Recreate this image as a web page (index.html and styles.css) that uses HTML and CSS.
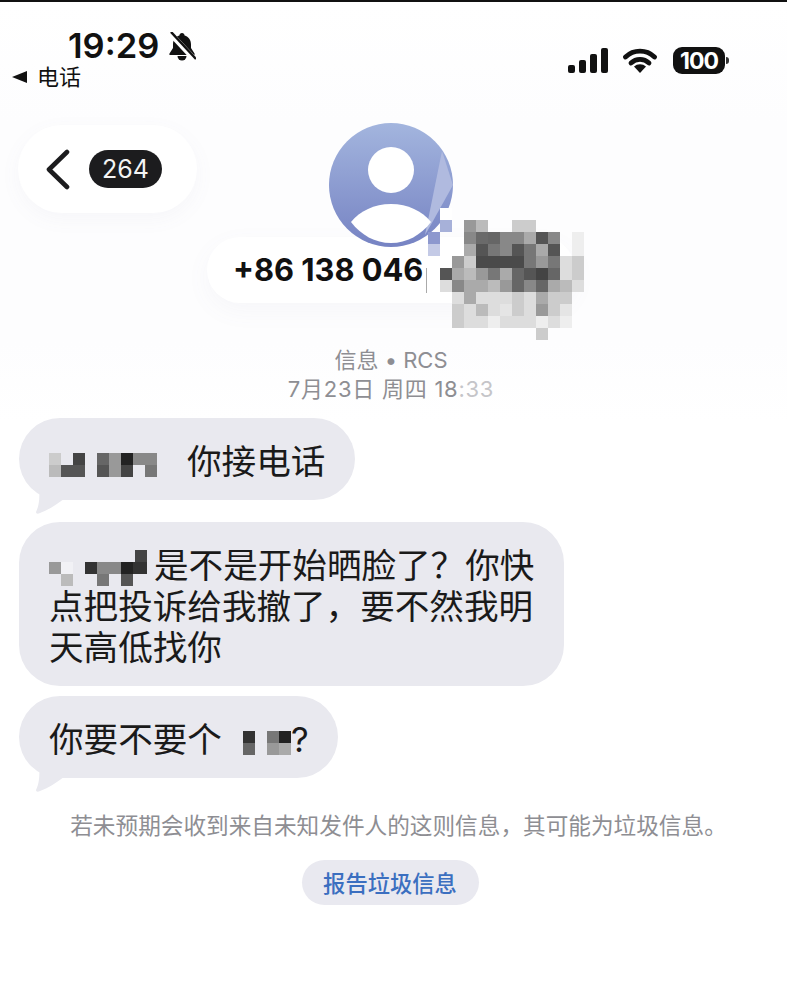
FILE: index.html
```html
<!DOCTYPE html>
<html lang="en">
<head>
    <meta charset="UTF-8">
    <meta name="viewport" content="width=device-width, initial-scale=1.0">
    <title>信息</title>
    <link rel="stylesheet" href="styles.css">
</head>
<body>
    <div class="screen">
        <div class="status-bar">
            <div class="status-left">
                <div class="clock">
                    <span class="time">19:29</span>
                    <svg class="bell" viewBox="0 0 28 29" width="28" height="29">
                        <path d="M14 1c1.500 0 2.500 1 2.600 2.400 4 1.200 6.400 4.500 6.400 9V16l3.500 5.500c.5 1-.1 1.500-1 1.500H2.500c-.9 0-1.500-.5-1-1.500L5 16v-3.600c0-4.500 2.400-7.800 6.400-9C11.500 2 12.500 1 14 1z" fill="#111"/>
                        <path d="M9.500 24h9a4.500 4.500 0 0 1-9 0z" fill="#111"/>
                        <path d="M2 1l25 27" stroke="#fff" stroke-width="5.500"/>
                        <path d="M3 0l25 27" stroke="#111" stroke-width="2.500"/>
                    </svg>
                </div>
                <div class="return-link"><span class="return-arrow"></span>电话</div>
            </div>
            <div class="status-right">
                <svg viewBox="0 0 40 25" width="40" height="25">
                    <rect x="0" y="17" width="7" height="8" rx="2" fill="#111"/>
                    <rect x="11" y="12" width="7" height="13" rx="2" fill="#111"/>
                    <rect x="22" y="6" width="7" height="19" rx="2" fill="#111"/>
                    <rect x="33" y="0" width="7" height="25" rx="2" fill="#111"/>
                </svg>
                <svg class="wifi" viewBox="0 0 34 25" width="34" height="25">
                    <path d="M2.500 9a21 21 0 0 1 29 0" fill="none" stroke="#111" stroke-width="4.800" stroke-linecap="round"/>
                    <path d="M8 15a13 13 0 0 1 18 0" fill="none" stroke="#111" stroke-width="4.800" stroke-linecap="round"/>
                    <path d="M11 18.500a9 9 0 0 1 12 0L17 25z" fill="#111"/>
                </svg>
                <div class="battery"><span class="battery-level">100</span><span class="battery-nub"></span></div>
            </div>
        </div>

        <div class="header">
            <div class="back-pill">
                <svg viewBox="0 0 26 41" width="26" height="41">
                    <path d="M22 3L4 20.500 22 38" fill="none" stroke="#1c1c1e" stroke-width="4.600" stroke-linecap="round" stroke-linejoin="round"/>
                </svg>
                <span class="badge">264</span>
            </div>
            <div class="contact">
                <svg class="avatar" viewBox="0 0 124 124" width="124" height="124">
                    <defs>
                        <linearGradient id="avatar-fill" x1="0" y1="0" x2="0" y2="1">
                            <stop offset="0" stop-color="#a3b5de"/>
                            <stop offset="1" stop-color="#7683c3"/>
                        </linearGradient>
                        <clipPath id="avatar-clip"><circle cx="62" cy="62" r="62"/></clipPath>
                    </defs>
                    <circle cx="62" cy="62" r="62" fill="url(#avatar-fill)"/>
                    <path d="M113 28L124 62 104 98 96 112z" fill="#b0badf" clip-path="url(#avatar-clip)"/>
                    <circle cx="62" cy="47" r="23" fill="#fff"/>
                    <path d="M22 99c9-11 23-18 40-18s31 7 40 18c-10 13-24 21-40 21s-30-8-40-21z" fill="#fff"/>
                </svg>
                <div class="phone-pill">
                    <span class="phone">+86 138 046</span>
                    <span class="phone-caret"></span>
                    <svg class="mosaic-large" viewBox="-12 -12 156 144" width="156" height="144" shape-rendering="crispEdges">
                        <rect x="-12" y="12" width="12" height="12" fill="#8d98ce"/>
                        <rect x="0" y="-12" width="12" height="12" fill="#fff"/>
                        <rect x="0" y="0" width="12" height="12" fill="#a7b1d9"/>
                        <rect x="-12" y="24" width="12" height="12" fill="#c4cae6"/>

                        <rect x="24" y="0" width="12" height="12" fill="#999"/>
                        <rect x="36" y="0" width="12" height="12" fill="#bbb"/>
                        <rect x="72" y="0" width="12" height="12" fill="#ccc"/>
                        <rect x="84" y="0" width="12" height="12" fill="#ccc"/>

                        <rect x="24" y="12" width="12" height="12" fill="#888"/>
                        <rect x="36" y="12" width="12" height="12" fill="#6a6a6a"/>
                        <rect x="48" y="12" width="12" height="12" fill="#666"/>
                        <rect x="60" y="12" width="12" height="12" fill="#888"/>
                        <rect x="72" y="12" width="12" height="12" fill="#888"/>
                        <rect x="84" y="12" width="12" height="12" fill="#aaa"/>
                        <rect x="96" y="12" width="12" height="12" fill="#555"/>
                        <rect x="108" y="12" width="12" height="12" fill="#888"/>
                        <rect x="132" y="12" width="12" height="12" fill="#eee"/>

                        <rect x="24" y="24" width="12" height="12" fill="#aaa"/>
                        <rect x="36" y="24" width="12" height="12" fill="#555"/>
                        <rect x="48" y="24" width="12" height="12" fill="#777"/>
                        <rect x="60" y="24" width="12" height="12" fill="#888"/>
                        <rect x="72" y="24" width="12" height="12" fill="#555"/>
                        <rect x="84" y="24" width="12" height="12" fill="#777"/>
                        <rect x="96" y="24" width="12" height="12" fill="#aaa"/>
                        <rect x="108" y="24" width="12" height="12" fill="#555"/>
                        <rect x="132" y="24" width="12" height="12" fill="#eee"/>

                        <rect x="12" y="36" width="12" height="12" fill="#999"/>
                        <rect x="24" y="36" width="12" height="12" fill="#ccc"/>
                        <rect x="36" y="36" width="12" height="12" fill="#4a4a4a"/>
                        <rect x="48" y="36" width="12" height="12" fill="#4a4a4a"/>
                        <rect x="60" y="36" width="12" height="12" fill="#4a4a4a"/>
                        <rect x="72" y="36" width="12" height="12" fill="#4a4a4a"/>
                        <rect x="84" y="36" width="12" height="12" fill="#777"/>
                        <rect x="96" y="36" width="12" height="12" fill="#999"/>
                        <rect x="108" y="36" width="12" height="12" fill="#777"/>
                        <rect x="120" y="36" width="12" height="12" fill="#ddd"/>
                        <rect x="132" y="36" width="12" height="12" fill="#ccc"/>

                        <rect x="0" y="48" width="12" height="12" fill="#555"/>
                        <rect x="12" y="48" width="12" height="12" fill="#aaa"/>
                        <rect x="24" y="48" width="12" height="12" fill="#bbb"/>
                        <rect x="36" y="48" width="12" height="12" fill="#999"/>
                        <rect x="48" y="48" width="12" height="12" fill="#777"/>
                        <rect x="60" y="48" width="12" height="12" fill="#aaa"/>
                        <rect x="72" y="48" width="12" height="12" fill="#666"/>
                        <rect x="84" y="48" width="12" height="12" fill="#555"/>
                        <rect x="96" y="48" width="12" height="12" fill="#444"/>
                        <rect x="108" y="48" width="12" height="12" fill="#666"/>
                        <rect x="120" y="48" width="12" height="12" fill="#ddd"/>
                        <rect x="132" y="48" width="12" height="12" fill="#ccc"/>

                        <rect x="0" y="60" width="12" height="12" fill="#ddd"/>
                        <rect x="12" y="60" width="12" height="12" fill="#888"/>
                        <rect x="24" y="60" width="12" height="12" fill="#aaa"/>
                        <rect x="36" y="60" width="12" height="12" fill="#aaa"/>
                        <rect x="48" y="60" width="12" height="12" fill="#bbb"/>
                        <rect x="60" y="60" width="12" height="12" fill="#999"/>
                        <rect x="72" y="60" width="12" height="12" fill="#666"/>
                        <rect x="84" y="60" width="12" height="12" fill="#888"/>
                        <rect x="96" y="60" width="12" height="12" fill="#666"/>
                        <rect x="108" y="60" width="12" height="12" fill="#aaa"/>
                        <rect x="120" y="60" width="12" height="12" fill="#bbb"/>
                        <rect x="132" y="60" width="12" height="12" fill="#ddd"/>

                        <rect x="12" y="72" width="12" height="12" fill="#ddd"/>
                        <rect x="24" y="72" width="12" height="12" fill="#aaa"/>
                        <rect x="36" y="72" width="12" height="12" fill="#ddd"/>
                        <rect x="48" y="72" width="12" height="12" fill="#ddd"/>
                        <rect x="60" y="72" width="12" height="12" fill="#ddd"/>
                        <rect x="72" y="72" width="12" height="12" fill="#ccc"/>
                        <rect x="84" y="72" width="12" height="12" fill="#ddd"/>
                        <rect x="96" y="72" width="12" height="12" fill="#aaa"/>
                        <rect x="108" y="72" width="12" height="12" fill="#ccc"/>
                        <rect x="120" y="72" width="12" height="12" fill="#ccc"/>

                        <rect x="12" y="84" width="12" height="12" fill="#ccc"/>
                        <rect x="24" y="84" width="12" height="12" fill="#ddd"/>
                        <rect x="36" y="84" width="12" height="12" fill="#bbb"/>
                        <rect x="48" y="84" width="12" height="12" fill="#ddd"/>
                        <rect x="60" y="84" width="12" height="12" fill="#e5e5e5"/>
                        <rect x="72" y="84" width="12" height="12" fill="#ccc"/>
                        <rect x="84" y="84" width="12" height="12" fill="#ddd"/>
                        <rect x="96" y="84" width="12" height="12" fill="#999"/>
                        <rect x="108" y="84" width="12" height="12" fill="#ccc"/>
                        <rect x="120" y="84" width="12" height="12" fill="#e5e5e5"/>

                        <rect x="12" y="96" width="12" height="12" fill="#ccc"/>
                        <rect x="24" y="96" width="12" height="12" fill="#ddd"/>
                        <rect x="36" y="96" width="12" height="12" fill="#ddd"/>
                        <rect x="48" y="96" width="12" height="12" fill="#eee"/>
                        <rect x="60" y="96" width="12" height="12" fill="#ddd"/>
                        <rect x="72" y="96" width="12" height="12" fill="#ddd"/>
                        <rect x="84" y="96" width="12" height="12" fill="#ddd"/>
                        <rect x="96" y="96" width="12" height="12" fill="#eee"/>
                        <rect x="108" y="96" width="12" height="12" fill="#ddd"/>
                        <rect x="120" y="96" width="12" height="12" fill="#eee"/>

                        <rect x="96" y="108" width="12" height="12" fill="#ccc"/>
                    </svg>
                </div>
            </div>
        </div>

        <div class="thread-meta">
            <div>信息 • RCS</div>
            <div class="thread-date">7月23日 周四 18<span class="faded">:33</span></div>
        </div>

        <div class="thread">
            <div class="bubble bubble-short">
                <svg class="mosaic mosaic-one" viewBox="0 0 108 24" width="108" height="24" shape-rendering="crispEdges">
                    <rect x="0" y="0" width="12" height="12" fill="#ccc"/>
                    <rect x="0" y="12" width="12" height="12" fill="#bbb"/>
                    <rect x="12" y="12" width="12" height="12" fill="#555"/>
                    <rect x="24" y="0" width="12" height="12" fill="#444"/>
                    <rect x="24" y="12" width="12" height="12" fill="#555"/>
                    <rect x="48" y="0" width="12" height="12" fill="#666"/>
                    <rect x="48" y="12" width="12" height="12" fill="#555"/>
                    <rect x="60" y="0" width="12" height="12" fill="#999"/>
                    <rect x="60" y="12" width="12" height="12" fill="#999"/>
                    <rect x="72" y="0" width="12" height="12" fill="#222"/>
                    <rect x="72" y="12" width="12" height="12" fill="#444"/>
                    <rect x="84" y="0" width="12" height="12" fill="#888"/>
                    <rect x="96" y="0" width="12" height="12" fill="#888"/>
                    <rect x="96" y="12" width="12" height="12" fill="#777"/>
                </svg>你接电话
                <svg class="tail" viewBox="0 0 28 26" width="28" height="26"><path d="M3 0C4 8 3 17 0 23c0 2 2 2 4 1C12 21 20 16 28 10V0z" fill="#e9e9ef"/></svg>
            </div>
            <div class="bubble bubble-long">
                <svg class="mosaic mosaic-two" viewBox="0 0 100 36" width="100" height="36" shape-rendering="crispEdges">
                    <rect x="86" y="0" width="12" height="12" fill="#444"/>
                    <rect x="0" y="12" width="12" height="12" fill="#999"/>
                    <rect x="12" y="12" width="12" height="12" fill="#f1f1f5"/>
                    <rect x="36" y="12" width="12" height="12" fill="#333"/>
                    <rect x="48" y="12" width="12" height="12" fill="#888"/>
                    <rect x="60" y="12" width="12" height="12" fill="#888"/>
                    <rect x="72" y="12" width="12" height="12" fill="#222"/>
                    <rect x="84" y="12" width="14" height="12" fill="#333"/>
                    <rect x="12" y="24" width="12" height="12" fill="#bbb"/>
                    <rect x="48" y="24" width="12" height="12" fill="#777"/>
                    <rect x="72" y="24" width="12" height="12" fill="#555"/>
                </svg>是不是开始晒脸了？你快<br>点把投诉给我撤了，要不然我明<br>天高低找你
            </div>
            <div class="bubble bubble-last">
                你要不要个<svg class="mosaic mosaic-three" viewBox="0 0 48 24" width="48" height="24" shape-rendering="crispEdges">
                    <rect x="0" y="0" width="12" height="12" fill="#333"/>
                    <rect x="0" y="12" width="12" height="12" fill="#666"/>
                    <rect x="24" y="0" width="12" height="12" fill="#777"/>
                    <rect x="24" y="12" width="12" height="12" fill="#999"/>
                    <rect x="36" y="0" width="12" height="12" fill="#222"/>
                    <rect x="36" y="12" width="12" height="12" fill="#aaa"/>
                </svg><span class="question">?</span>
                <svg class="tail" viewBox="0 0 28 26" width="28" height="26"><path d="M3 0C4 8 3 17 0 23c0 2 2 2 4 1C12 21 20 16 28 10V0z" fill="#e9e9ef"/></svg>
            </div>
        </div>

        <p class="spam-note">若未预期会收到来自未知发件人的这则信息，其可能为垃圾信息。</p>
        <div class="spam-action"><span class="spam-btn">报告垃圾信息</span></div>
    </div>
</body>
</html>
```

FILE: styles.css
```css
/* Reset default browser styles */
html, body {
    margin: 0;
    padding: 0;
    height: 100%;
    background: #fff;
    overflow: hidden;
    font-family: Inter, "Noto Sans CJK SC", sans-serif;
    color: #111;
}

.screen {
    width: 787px;
    height: 996px;
    box-sizing: border-box;
    border-top: 2px solid #111;
    background: linear-gradient(#fff 0, #fdfdfe 120px, #fdfdfe 340px, #fff 420px);
}

/* Status bar */
.status-bar {
    display: flex;
    justify-content: space-between;
    height: 121px;
    padding: 29px 62px 0 12px;
    box-sizing: border-box;
}

.clock {
    display: flex;
    align-items: center;
    gap: 9px;
    margin-left: 56px;
    height: 30px;
}

.time {
    font-size: 34.500px;
    font-weight: 600;
    line-height: 30px;
}

.return-link {
    display: flex;
    align-items: center;
    font-size: 22px;
    line-height: 26px;
    margin-top: 3px;
}

.return-arrow {
    width: 0;
    height: 0;
    border-style: solid;
    border-width: 6px 15px 6px 0;
    border-color: transparent #111 transparent transparent;
    margin-right: 10px;
}

.status-right {
    display: flex;
    align-items: flex-start;
    gap: 15px;
    padding-top: 17px;
}

.battery {
    position: relative;
    width: 52px;
    height: 27px;
    margin: -1px 0 0 1px;
    background: #111;
    border-radius: 9px;
    display: flex;
    align-items: center;
    justify-content: center;
}

.battery-level {
    color: #fff;
    font-size: 23px;
    font-weight: 700;
    letter-spacing: -1px;
}

.battery-nub {
    position: absolute;
    right: -4px;
    top: 10px;
    width: 3px;
    height: 7px;
    background: #333;
    border-radius: 0 3px 3px 0;
}

/* Header */
.header {
    display: grid;
    grid-template-columns: 179px 388px;
    padding-left: 18px;
}

.back-pill {
    display: flex;
    align-items: center;
    gap: 18px;
    height: 88px;
    margin-top: 2px;
    padding-left: 27px;
    box-sizing: border-box;
    background: #fff;
    border-radius: 44px;
    box-shadow: 0 6px 20px rgba(120, 120, 150, 0.05);
}

.badge {
    width: 73px;
    height: 38px;
    line-height: 38px;
    text-align: center;
    border-radius: 19px;
    background: #1c1c1e;
    color: #f4f4f4;
    font-size: 25px;
}

.contact {
    display: flex;
    flex-direction: column;
    align-items: center;
}

.avatar {
    position: relative;
    z-index: 1;
}

.phone-pill {
    position: relative;
    width: 368px;
    height: 66px;
    margin-top: -10px;
    box-sizing: border-box;
    padding-left: 26px;
    background: #fff;
    border-radius: 33px;
    box-shadow: 0 8px 24px rgba(120, 120, 150, 0.05);
}

.phone {
    display: block;
    font-size: 30.800px;
    font-weight: 700;
    line-height: 66px;
}

.phone-caret {
    position: absolute;
    left: 219px;
    top: 31px;
    width: 1px;
    height: 25px;
    background: #aaa;
}

.mosaic-large {
    position: absolute;
    z-index: 2;
    left: 221px;
    top: -29px;
}

/* Thread */
.thread-meta {
    margin-top: 43px;
    text-align: center;
    margin-right: 5px;
    font-size: 22px;
    line-height: 29px;
    color: #8e8e93;
}

.thread-date {
    letter-spacing: 0.75px;
}

.faded {
    color: #c5c5c9;
}

.thread {
    margin-top: 14px;
    padding-left: 19px;
    display: flex;
    flex-direction: column;
    align-items: flex-start;
}

.bubble {
    position: relative;
    padding: 20.500px 30px;
    background: #e9e9ef;
    border-radius: 41px;
    font-family: "Noto Sans CJK SC", sans-serif;
    font-size: 34.600px;
    line-height: 41px;
    color: #1a1a1a;
    white-space: nowrap;
}

.bubble-long {
    margin-top: 22px;
}

.bubble-last {
    margin-top: 10px;
    width: 259px;
}

.question {
    font-family: Inter, sans-serif;
    line-height: 1;
}

.mosaic {
    vertical-align: -3px;
}

.mosaic-one {
    margin-right: 30px;
}

.mosaic-two {
    vertical-align: 2px;
    margin: -14px 5px -10px 0;
}

.mosaic-three {
    margin-left: 21px;
}

.tail {
    position: absolute;
    left: 17px;
    bottom: -15px;
}

/* Footer */
.spam-note {
    margin: 32px 0 0 10px;
    text-align: center;
    font-family: "Noto Sans CJK SC", sans-serif;
    font-size: 22.650px;
    line-height: 30px;
    color: #8e8e93;
    white-space: nowrap;
}

.spam-action {
    display: flex;
    justify-content: center;
    margin: 20px 7px 0 0;
}

.spam-btn {
    width: 177px;
    height: 45px;
    line-height: 44px;
    text-align: center;
    background: #e9e9f0;
    border-radius: 23px;
    color: #3b6fc0;
    font-size: 22.300px;
    font-weight: 500;
    font-family: "Noto Sans CJK SC", sans-serif;
}
```
